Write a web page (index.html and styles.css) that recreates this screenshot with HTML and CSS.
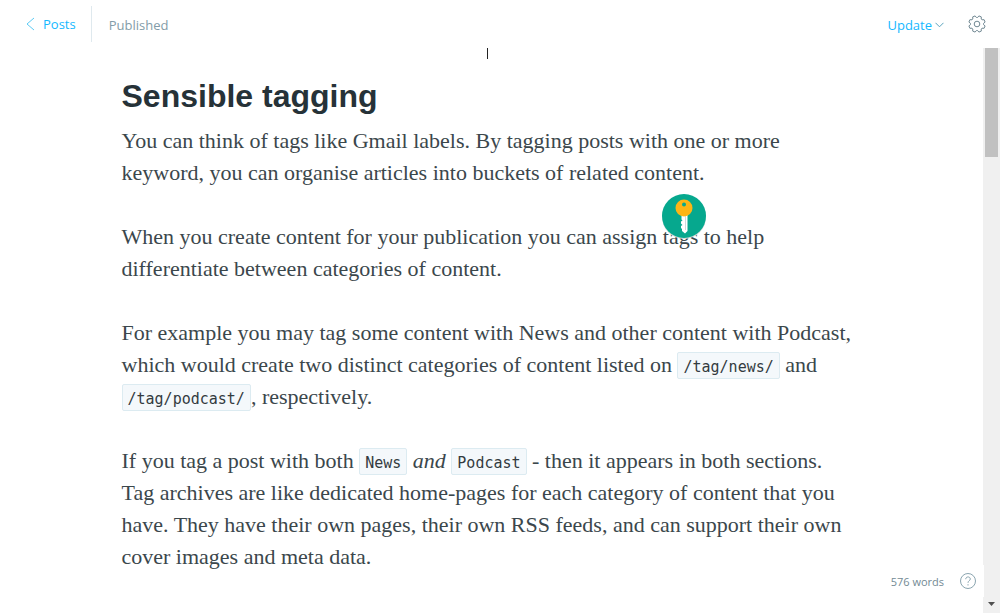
FILE: index.html
```html
<!DOCTYPE html>
<html lang="en">
<head>
<meta charset="utf-8">
<meta name="viewport" content="width=device-width, initial-scale=1">
<title>Sensible tagging</title>
<link rel="stylesheet" href="styles.css">
</head>
<body>
<header class="topbar">
  <a class="back" href="#posts">
    <svg class="back-icon" width="9" height="14" viewBox="0 0 9 14" aria-hidden="true"><path d="M8 1 1 7l7 6"/></svg>
    Posts
  </a>
  <span class="status">Published</span>
  <button class="update" type="button">
    Update
    <svg class="update-icon" width="9" height="6" viewBox="0 0 9 6" aria-hidden="true"><path d="M.5.8 4.5 4.8 8.500.8"/></svg>
  </button>
  <button class="settings" type="button" aria-label="Settings">
    <svg width="18" height="18" viewBox="0 0 18 18" aria-hidden="true">
      <path d="M15.500 9.600 17.100 10.900 16.100 13.300 14 13.200 13.200 14 13.300 16.100 10.900 17.100 9.600 15.500H8.400L7.100 17.100 4.700 16.100 4.800 14 4 13.200 1.900 13.300.9 10.900 2.500 9.600V8.400L.9 7.100 1.900 4.700 4 4.800 4.800 4 4.700 1.900 7.100.9 8.400 2.500H9.600L10.900.9 13.300 1.900 13.200 4 14 4.800 16.100 4.700 17.100 7.100 15.500 8.400z"/>
      <circle cx="9" cy="9" r="2.800"/>
    </svg>
  </button>
</header>
<div class="workspace">
  <main class="editor">
    <div class="caret"></div>
    <article class="post">
      <h1 class="title">Sensible tagging</h1>
      <p>You can think of tags like Gmail labels. By tagging posts with one or more<br>keyword, you can organise articles into buckets of related content.</p>
      <p>When you create content for your publication you can assign <span class="tagged">tags<svg class="key" width="48" height="48" viewBox="0 0 48 48" aria-hidden="true">
        <circle class="key-shadow" cx="24" cy="25" r="22"/>
        <circle class="key-disc" cx="24" cy="24" r="22"/>
        <path class="key-blade" d="M21.500 22h6v17l-2.500 2.500-3-2.500v-2l-1-1v-2l1.500-1-1.500-1.500v-2l1.500-1-1-1z"/>
        <path class="key-groove" d="M25.500 24v14"/>
        <circle class="key-head" cx="24" cy="16" r="8.500"/>
        <circle class="key-disc" cx="24" cy="12.500" r="2"/>
      </svg></span> to help<br>differentiate between categories of content.</p>
      <p>For example you may tag some content with News and other content with Podcast,<br>which would create two distinct categories of content listed on <code>/tag/news/</code> and<br><code>/tag/podcast/</code>, respectively.</p>
      <p>If you tag a post with both <code>News</code> <em>and</em> <code>Podcast</code> - then it appears in both sections.<br>Tag archives are like dedicated home-pages for each category of content that you<br>have. They have their own pages, their own RSS feeds, and can support their own<br>cover images and meta data.</p>
    </article>
  </main>
  <div class="scrollbar" aria-hidden="true">
    <div class="thumb"></div>
    <svg class="scroll-down" width="7" height="4" viewBox="0 0 7 4"><path d="M0 0h7L3.500 4z"/></svg>
  </div>
  <footer class="meta">
    <span>576 words</span>
    <a class="help" href="#help" aria-label="Markdown help">
      <svg width="18" height="18" viewBox="0 0 18 18" aria-hidden="true"><circle cx="9" cy="9" r="7.500"/><path d="M6.700 7.200c0-3 4.600-3 4.600-.2C11.300 8.800 9 8.700 9 10.800M9 12.200v1.300"/></svg>
    </a>
  </footer>
</div>
</body>
</html>
```
FILE: styles.css
```css
* {
  box-sizing: border-box;
}

body {
  display: flex;
  flex-direction: column;
  height: 100vh;
  margin: 0;
  overflow: hidden;
  background: #fff;
  color: #3b474c;
  font-family: "Open Sans", "Noto Sans", sans-serif;
  font-size: 13px;
}

svg {
  display: block;
  fill: none;
}

button {
  padding: 0;
  border: 0;
  background: none;
  font: inherit;
  cursor: pointer;
}

.topbar {
  display: flex;
  flex: none;
  align-items: center;
  height: 48px;
  padding: 0 14px 0 26px;
}

.back {
  display: flex;
  align-items: center;
  gap: 8px;
  height: 36px;
  padding-right: 15px;
  border-right: 1px solid #dfe9ee;
  color: #14b8ff;
  text-decoration: none;
}

.back-icon {
  stroke: #5ccbf5;
}

.status {
  padding-top: 2px;
  margin-left: 17px;
  color: #839ca8;
}

.update {
  display: flex;
  align-items: center;
  gap: 3px;
  padding-top: 2px;
  margin-left: auto;
  color: #14b8ff;
}

.update-icon {
  stroke: #5aa3bd;
}

.settings {
  margin-left: 24px;
}

.settings svg {
  stroke: #738a94;
  stroke-linejoin: round;
}

.workspace {
  position: relative;
  display: flex;
  flex: 1;
  min-height: 0;
}

.editor {
  flex: 1;
  overflow: hidden;
}

.caret {
  width: 1px;
  height: 11px;
  margin: 0 auto;
  translate: -4px 0;
  background: #222;
}

.post {
  max-width: 740px;
  margin: 18px auto 0;
  font-family: Georgia, "Liberation Serif", serif;
  font-size: 22px;
  line-height: 32px;
  white-space: nowrap;
}

.post p {
  margin: 0 0 32px;
}

.title {
  margin: 0;
  padding-bottom: 10px;
  color: #263238;
  font-family: "Liberation Sans", Arial, sans-serif;
  font-size: 32px;
  line-height: 38px;
}

code {
  display: inline-block;
  padding: 3px 5px 0;
  border: 1px solid #dcebf1;
  border-radius: 2px;
  background: #f4f8fb;
  color: #333b3f;
  font-family: "DejaVu Sans Mono", monospace;
  font-size: 15px;
  line-height: 22px;
}

.tagged {
  position: relative;
}

.key {
  position: absolute;
  bottom: 9px;
  left: -3px;
}

.key-shadow {
  fill: #d3dcda;
}

.key-disc {
  fill: #06a88e;
}

.key-head {
  fill: #fdb515;
}

.key-blade {
  fill: #fff;
}

.key-groove {
  stroke: #cfd8dc;
}

.scrollbar {
  display: flex;
  flex: none;
  flex-direction: column;
  align-items: center;
  justify-content: space-between;
  width: 17px;
  padding-bottom: 7px;
  background: #f0f0f0;
}

.thumb {
  width: 13px;
  height: 109px;
  background: #c1c1c1;
}

.scroll-down {
  fill: #505050;
}

.meta {
  position: absolute;
  right: 16px;
  bottom: 16px;
  display: flex;
  align-items: center;
  gap: 15px;
  height: 32px;
  padding-left: 8px;
  padding-right: 7px;
  background: #fff;
  color: #738a94;
  font-size: 11px;
}

.help svg {
  stroke: #8ba5b0;
}
```
